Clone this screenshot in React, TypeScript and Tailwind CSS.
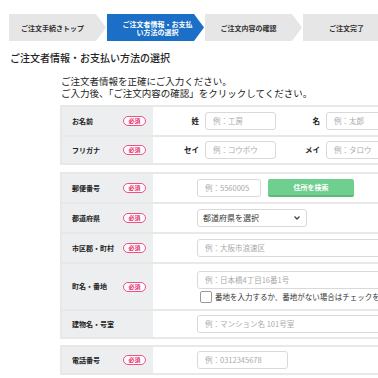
import React from "react";

const steps = [
  { label: "ご注文手続きトップ", active: false },
  { label: "ご注文者情報・お支払い方法の選択", active: true },
  { label: "ご注文内容の確認", active: false },
  { label: "ご注文完了", active: false },
];

const Badge = () => (
  <span className="flex h-[10px] w-[23px] items-center justify-center rounded-full border border-[#f0508a] bg-white text-[6px] leading-none font-bold text-[#e8336f]">
    必須
  </span>
);

const Row: React.FC<{
  label: string;
  required?: boolean;
  height?: string;
  last?: boolean;
  children: React.ReactNode;
}> = ({ label, required, height = "h-[30px]", last, children }) => (
  <div
    className={`flex border-t-2 border-l-2 border-[#e8e8e8] ${height} ${last ? "border-b-2" : ""}`}
  >
    <div className="flex w-[91px] shrink-0 items-center justify-between bg-[#eceef0] pr-[7px] pl-[10px]">
      <span className="text-[7px] font-bold text-[#222]">{label}</span>
      {required && <Badge />}
    </div>
    <div className="flex flex-1 flex-col justify-center bg-white">{children}</div>
  </div>
);

const Input: React.FC<{ placeholder: string; className?: string }> = ({ placeholder, className }) => (
  <div
    className={`flex h-[18px] items-center rounded-[3px] border border-[#d9d9d9] bg-white pl-[7px] text-[7.5px] text-[#aaa] ${className ?? ""}`}
  >
    {placeholder}
  </div>
);

export default function App() {
  return (
    <div className="relative h-[378px] w-[378px] overflow-hidden bg-white font-['Noto_Sans_CJK_JP',sans-serif]">
      {/* steps */}
      <div className="flex gap-[1px] pt-[14px] pl-[9px]">
        {steps.map((s) => (
          <div
            key={s.label}
            className={`flex h-[27px] w-[97px] shrink-0 items-center justify-center pr-[10px] text-center text-[7px] leading-[8px] font-bold [clip-path:polygon(0_0,calc(100%-10px)_0,100%_50%,calc(100%-10px)_100%,0_100%)] ${
              s.active ? "bg-[#1b6fc6] px-[14px] text-white" : "bg-[#e6e6e6] text-[#333]"
            }`}
          >
            {s.label}
          </div>
        ))}
      </div>

      <div className="mt-[11px] pl-[10px] text-[10px] leading-[12px] font-medium text-[#222]">
        ご注文者情報・お支払い方法の選択
      </div>

      <div className="mt-[11px] pl-[61px] text-[9.5px] leading-[12px] text-[#222]">
        <p>ご注文者情報を正確にご入力ください。</p>
        <p>ご入力後、「ご注文内容の確認」をクリックしてください。</p>
      </div>

      <div className="mt-[6px] ml-[60px] w-[400px]">
        {/* name */}
        <div>
          <Row label="お名前" required>
            <div className="flex items-center">
              <span className="w-[52px] pr-[6px] text-right text-[7.5px] font-bold text-[#222]">姓</span>
              <Input placeholder="例：工房" className="w-[71px]" />
              <span className="w-[50px] pr-[6px] text-right text-[7.5px] font-bold text-[#222]">名</span>
              <Input placeholder="例：太郎" className="w-[71px]" />
            </div>
          </Row>
          <Row label="フリガナ" required last>
            <div className="flex items-center">
              <span className="w-[52px] pr-[6px] text-right text-[7.5px] font-bold text-[#222]">セイ</span>
              <Input placeholder="例：コウボウ" className="w-[71px]" />
              <span className="w-[50px] pr-[6px] text-right text-[7.5px] font-bold text-[#222]">メイ</span>
              <Input placeholder="例：タロウ" className="w-[71px]" />
            </div>
          </Row>
        </div>

        {/* address */}
        <div className="mt-[7px]">
          <Row label="郵便番号" required>
            <div className="flex items-center pl-[44px]">
              <Input placeholder="例：5560005" className="w-[64px]" />
              <button className="ml-[7px] flex h-[18px] w-[86px] items-center justify-center rounded-[2px] border-b-2 border-[#5cbb7b] bg-[#6fcf8e] text-[7px] font-bold text-white">
                住所を検索
              </button>
            </div>
          </Row>
          <Row label="都道府県" required>
            <div className="flex items-center pl-[44px]">
              <div className="flex h-[18px] w-[110px] items-center justify-between rounded-[3px] border border-[#d9d9d9] bg-white pr-[6px] pl-[5px] text-[8px] text-[#333]">
                <span>都道府県を選択</span>
                <svg width="6" height="4" viewBox="0 0 6 4">
                  <path d="M0.5 0.5 L3 3 L5.5 0.5" fill="none" stroke="#444" strokeWidth="1.3" />
                </svg>
              </div>
            </div>
          </Row>
          <Row label="市区郡・町村" required>
            <div className="pl-[44px]">
              <Input placeholder="例：大阪市浪速区" className="w-[300px]" />
            </div>
          </Row>
          <Row label="町名・番地" required height="h-[47px]">
            <div className="pl-[44px]">
              <Input placeholder="例：日本橋4丁目16番1号" className="w-[300px]" />
              <label className="mt-[2px] ml-[3px] flex items-center gap-[3px] text-[7.5px] whitespace-nowrap text-[#333]">
                <span className="h-[12px] w-[12px] shrink-0 rounded-[2px] border border-[#999] bg-white" />
                番地を入力するか、番地がない場合はチェックを入れてください
              </label>
            </div>
          </Row>
          <Row label="建物名・号室" last>
            <div className="pl-[44px]">
              <Input placeholder="例：マンション名 101号室" className="w-[300px]" />
            </div>
          </Row>
        </div>

        {/* phone */}
        <div className="mt-[6px]">
          <Row label="電話番号" required last>
            <div className="pl-[44px]">
              <Input placeholder="例：0312345678" className="w-[91px]" />
            </div>
          </Row>
        </div>
      </div>
    </div>
  );
}
